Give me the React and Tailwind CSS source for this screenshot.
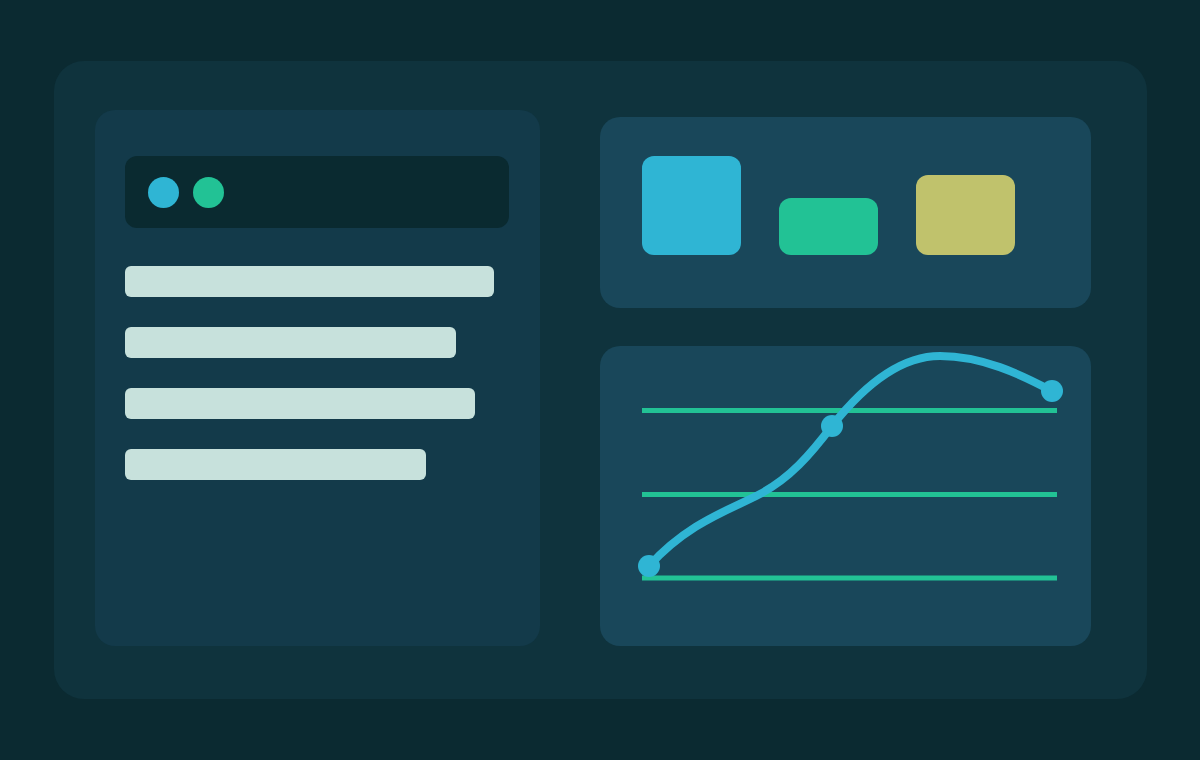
import React from 'react';

const bars = ['w-[369px]', 'w-[331px]', 'w-[350px]', 'w-[301px]'];

const Chart = () => (
  <svg className="absolute inset-0" width="491" height="300" viewBox="0 0 491 300" fill="none">
    {[64.5, 148.5, 232].map((y) => (
      <line key={y} x1="42" x2="457" y1={y} y2={y} stroke="#22c295" strokeWidth="5" />
    ))}
    <path
      d="M49 220 C 89 176 130 164 160 148 C 190 132 210 109 232 80 C 262 42 298 10 340 10 C 382 10 420 28 452 45"
      stroke="#2fb5d4"
      strokeWidth="8"
      strokeLinecap="round"
    />
    <circle cx="49" cy="220" r="11" fill="#2fb5d4" />
    <circle cx="232" cy="80" r="11" fill="#2fb5d4" />
    <circle cx="452" cy="45" r="11" fill="#2fb5d4" />
  </svg>
);

export default function App() {
  return (
    <div className="w-[1200px] h-[760px] bg-[#0b2a31] pt-[61px] pl-[54px]">
      <div className="w-[1093px] h-[638px] rounded-[30px] bg-[#0f333d] flex items-start gap-[60px] pl-[41px] pt-[49px]">
        {/* left window */}
        <div className="w-[445px] h-[536px] rounded-[20px] bg-[#133a4a] pl-[30px] pt-[46px]">
          <div className="w-[384px] h-[72px] rounded-[12px] bg-[#0a2a30] flex items-center gap-[14px] pl-[23px]">
            <div className="w-[31px] h-[31px] rounded-full bg-[#2fb5d4]" />
            <div className="w-[31px] h-[31px] rounded-full bg-[#22c295]" />
          </div>
          <div className="flex flex-col gap-[30px] mt-[38px]">
            {bars.map((w) => (
              <div key={w} className={`${w} h-[31px] rounded-[6px] bg-[#c7e1dc]`} />
            ))}
          </div>
        </div>

        {/* right column */}
        <div className="flex flex-col gap-[38px] mt-[7px]">
          <div className="w-[491px] h-[191px] rounded-[20px] bg-[#19475a] flex items-start gap-[38px] pl-[42px] pt-[39px]">
            <div className="w-[99px] h-[99px] rounded-[12px] bg-[#2fb5d4]" />
            <div className="w-[99px] h-[57px] mt-[42px] rounded-[12px] bg-[#22c295]" />
            <div className="w-[99px] h-[80px] mt-[19px] rounded-[12px] bg-[#c0c26c]" />
          </div>
          <div className="relative w-[491px] h-[300px] rounded-[20px] bg-[#19475a]">
            <Chart />
          </div>
        </div>
      </div>
    </div>
  );
}
